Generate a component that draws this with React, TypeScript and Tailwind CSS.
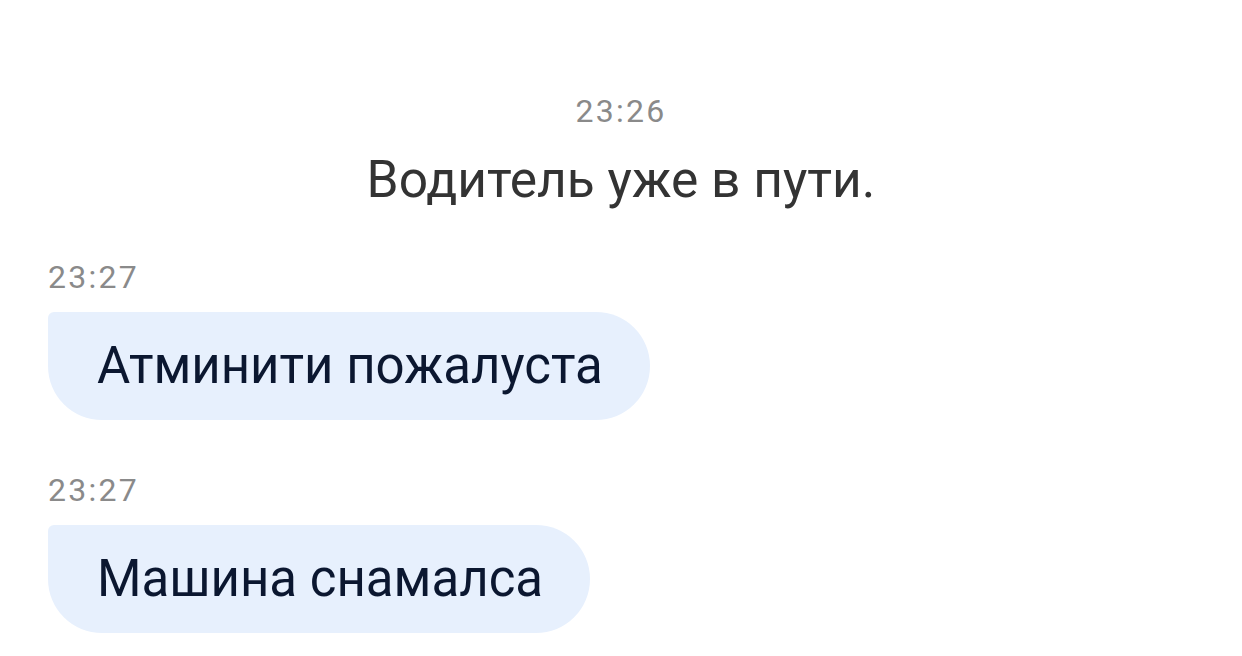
export default function App() {
  const font = { fontFamily: 'Roboto, "Noto Sans", sans-serif' };
  return (
    <div className="w-[1242px] h-[656px] bg-white overflow-hidden" style={font}>
      <div className="flex flex-col items-center pt-[94px]">
        <div className="text-[32px] leading-[34px] tracking-[0.07em] text-[#8a8a8a]">23:26</div>
        <div className="mt-[22px] text-[51.5px] leading-[60px] text-[#333333]">Водитель уже в пути.</div>
      </div>
      <div className="flex flex-col items-start px-[48px] pt-[50px]">
        <div className="text-[32px] leading-[34px] tracking-[0.07em] text-[#8a8a8a]">23:27</div>
        <div className="mt-[18px] h-[108px] flex items-center bg-[#e7f0fd] pl-[49px] pr-[47px] rounded-[54px] rounded-tl-[6px] text-[51px] text-[#0b1730]">
          Атминити пожалуста
        </div>
        <div className="mt-[53px] text-[32px] leading-[34px] tracking-[0.07em] text-[#8a8a8a]">23:27</div>
        <div className="mt-[18px] h-[108px] flex items-center bg-[#e7f0fd] pl-[49px] pr-[47px] rounded-[54px] rounded-tl-[6px] text-[51px] text-[#0b1730]">
          Машина снамалса
        </div>
      </div>
    </div>
  );
}
